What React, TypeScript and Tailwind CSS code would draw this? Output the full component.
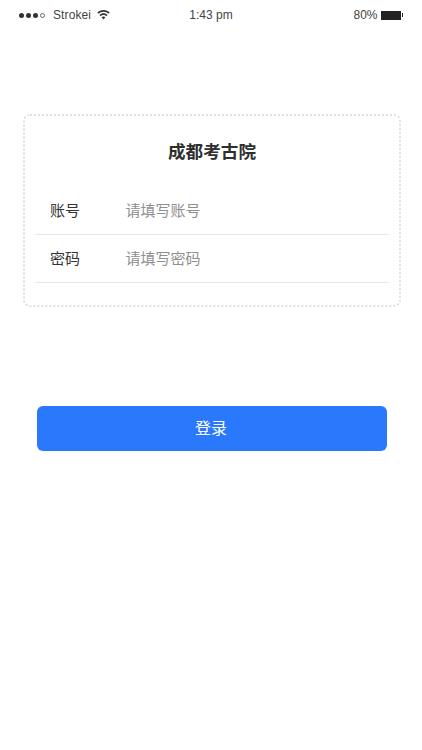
import React from 'react';

const FONT = "font-['Noto_Sans_CJK_SC','Noto_Sans',sans-serif]";

const StatusBar: React.FC = () => (
    <div className="h-[30px] flex items-center pl-[19px] pr-[19px] text-[#444] font-['Liberation_Sans',sans-serif]">
        <div className="flex-1 flex items-center">
            <div className="flex items-center gap-[2px]">
                <span className="w-[5px] h-[5px] rounded-full bg-[#333]" />
                <span className="w-[5px] h-[5px] rounded-full bg-[#333]" />
                <span className="w-[5px] h-[5px] rounded-full bg-[#333]" />
                <span className="w-[5px] h-[5px] rounded-full border-[0.5px] border-[#666]" />
            </div>
            <span className="ml-[8px] text-[12px] tracking-[0.1px]">Strokei</span>
            <svg className="ml-[6px] mb-[1px]" width="13" height="10" viewBox="0 0 13 10" fill="#333">
                <path d="M6.5 0C4 0 1.9 1 .3 2.6l1.2 1.2C2.8 2.5 4.5 1.7 6.5 1.7s3.7.8 5 2.1l1.2-1.2C11.1 1 9 0 6.5 0z" />
                <path d="M6.5 3.3c-1.6 0-3 .6-4 1.7l1.2 1.2c.7-.7 1.7-1.2 2.8-1.2s2.1.5 2.8 1.2L10.5 5c-1-1.1-2.4-1.7-4-1.7z" />
                <path d="M6.5 6.5c-.8 0-1.4.3-1.9.8L6.5 9.6l1.9-2.3c-.5-.5-1.1-.8-1.9-.8z" />
            </svg>
        </div>
        <span className="text-[12px]">1:43 pm</span>
        <div className="flex-1 flex items-center justify-end">
            <span className="text-[12px] mr-[-1px]">80%</span>
            <div className="ml-[4px] w-[20px] h-[9px] bg-[#222]" />
            <div className="ml-[1px] w-[1.5px] h-[4px] bg-[#222]" />
        </div>
    </div>
);

const Field: React.FC<{ label: string; placeholder: string }> = ({ label, placeholder }) => (
    <div className="h-[48px] flex items-center border-b border-[#e8e8e8] pl-[15px]">
        <span className="w-[75.5px] text-[15px] text-[#333]">{label}</span>
        <span className="text-[15px] text-[#8f8f8f]">{placeholder}</span>
    </div>
);

export default function App() {
    return (
        <div className={`w-[422px] h-[750px] bg-white overflow-hidden ${FONT}`}>
            <StatusBar />
            <div className="mt-[84px] mx-[23px] w-[378px] h-[193px] border-2 border-dotted border-[#e0e0e0] rounded-[7px] px-[10px]">
                <div className="h-[71px] pt-[21px] text-center text-[17.6px] leading-[28px] font-bold text-[#2f2f2f]">成都考古院</div>
                <Field label="账号" placeholder="请填写账号" />
                <Field label="密码" placeholder="请填写密码" />
            </div>
            <button className="block mt-[99px] ml-[36.5px] w-[350px] h-[45px] pb-[4px] pr-[1px] rounded-[6px] bg-[#2a78fb] text-white text-[16px]">登录</button>
        </div>
    );
}
